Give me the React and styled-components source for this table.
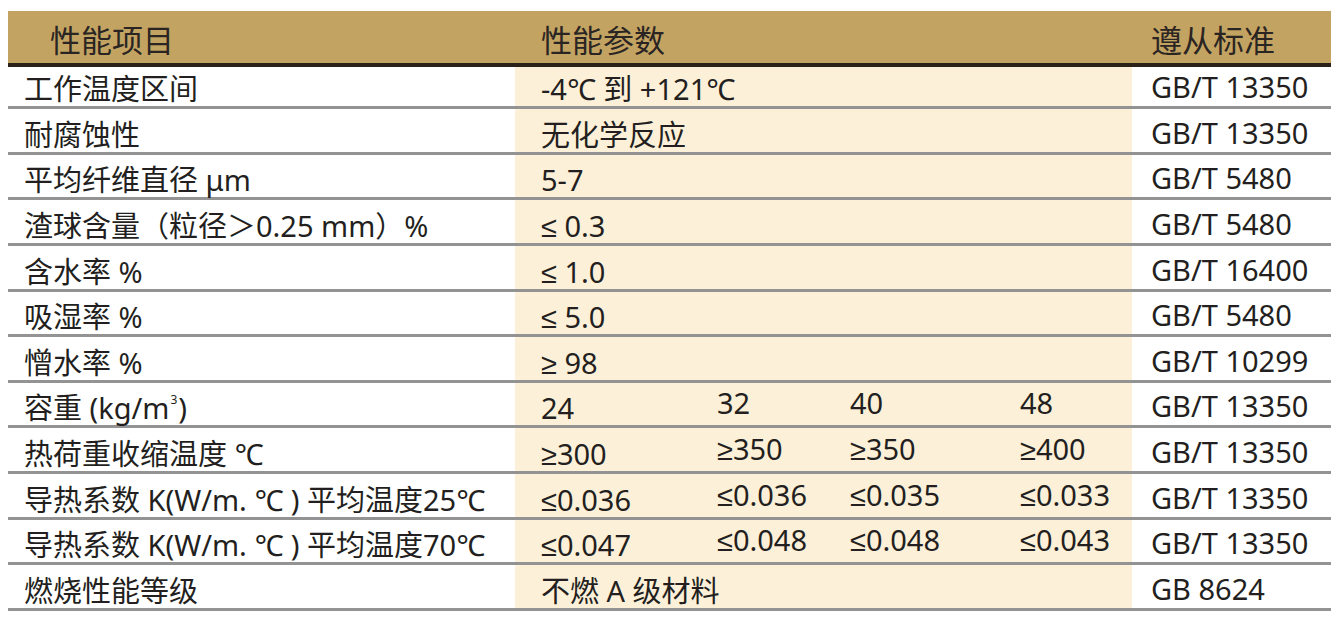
import React from "react";
import styled, { createGlobalStyle } from "styled-components";

const GlobalStyle = createGlobalStyle`
    body {
        margin: 0;
        background: #ffffff;
        font-family: "Noto Sans", "Liberation Sans", "Noto Sans CJK SC", sans-serif;
        color: #231f20;
    }
`;

const Page = styled.div`
    padding: 11px 13px 0 8px;
`;

const Table = styled.div`
    width: 1323px;
`;

const Head = styled.div`
    display: grid;
    grid-template-columns: 507px 617px 199px;
    height: 52px;
    background: #c3a362;
    border-bottom: 4px solid #2a2119;
`;

const HeadCell = styled.div`
    display: flex;
    align-items: center;
    padding-left: ${(props) => props.$pad}px;
    padding-top: 2px;
    font-family: "Noto Sans CJK SC", sans-serif;
    font-size: 31px;
    color: #2a2522;
`;

const Row = styled.div`
    display: grid;
    grid-template-columns: 507px 617px 199px;
    height: ${(props) => (props.$first ? 39.2 : 42.6)}px;
    border-bottom: 3px solid #939393;
`;

const Cell = styled.div`
    display: flex;
    align-items: flex-end;
    padding-left: ${(props) => props.$pad}px;
    padding-bottom: ${(props) => (props.$lift ? 5 : 3)}px;
    background: ${(props) => (props.$shade ? "#fdf0d9" : "transparent")};
    font-size: 29px;
    line-height: 29px;
    white-space: nowrap;
`;

const Text = styled.span`
    display: block;
`;

const Values = styled.div`
    display: grid;
    grid-template-columns: 176px 133px 170px 1fr;
    height: 100%;
    padding-left: 26px;
    background: #fdf0d9;
`;

const Value = styled.div`
    display: flex;
    align-items: flex-end;
    padding-bottom: ${(props) => (props.$raised ? 8 : 3)}px;
    font-size: 29px;
    line-height: 29px;
    white-space: nowrap;
`;

const Sup = styled.sup`
    font-size: 12px;
    line-height: 0;
    vertical-align: 15px;
    margin: 0 1px;
`;

const rows = [
    { name: "工作温度区间", value: "-4℃ 到 +121℃", std: "GB/T 13350" },
    { name: "耐腐蚀性", value: "无化学反应", std: "GB/T 13350" },
    { name: "平均纤维直径 μm", value: "5-7", std: "GB/T 5480" },
    { name: "渣球含量（粒径＞0.25 mm）%", value: "≤ 0.3", std: "GB/T 5480" },
    { name: "含水率 %", value: "≤ 1.0", std: "GB/T 16400" },
    { name: "吸湿率 %", value: "≤ 5.0", std: "GB/T 5480" },
    { name: "憎水率 %", value: "≥ 98", std: "GB/T 10299" },
    {
        name: (
            <>
                容重 (kg/m<Sup>3</Sup>)
            </>
        ),
        value: ["24", "32", "40", "48"],
        std: "GB/T 13350",
    },
    { name: "热荷重收缩温度 ℃", value: ["≥300", "≥350", "≥350", "≥400"], std: "GB/T 13350" },
    {
        name: "导热系数 K(W/m. ℃ ) 平均温度25℃",
        value: ["≤0.036", "≤0.036", "≤0.035", "≤0.033"],
        std: "GB/T 13350",
    },
    {
        name: "导热系数 K(W/m. ℃ ) 平均温度70℃",
        value: ["≤0.047", "≤0.048", "≤0.048", "≤0.043"],
        std: "GB/T 13350",
    },
    { name: "燃烧性能等级", value: "不燃 A 级材料", std: "GB 8624" },
];

const App = () => {
    return (
        <>
            <GlobalStyle />
            <Page>
                <Table>
                    <Head>
                        <HeadCell $pad={42}>性能项目</HeadCell>
                        <HeadCell $pad={26}>性能参数</HeadCell>
                        <HeadCell $pad={19}>遵从标准</HeadCell>
                    </Head>
                    {rows.map((row, i) => (
                        <Row key={i} $first={i === 0}>
                            <Cell $pad={16}>
                                <Text>{row.name}</Text>
                            </Cell>
                            {Array.isArray(row.value) ? (
                                <Values>
                                    {row.value.map((v, j) => (
                                        <Value key={j} $raised={j > 0}>
                                            {v}
                                        </Value>
                                    ))}
                                </Values>
                            ) : (
                                <Cell $pad={26} $shade>
                                    <Text>{row.value}</Text>
                                </Cell>
                            )}
                            <Cell $pad={19} $lift>
                                <Text>{row.std}</Text>
                            </Cell>
                        </Row>
                    ))}
                </Table>
            </Page>
        </>
    );
};

export default App;
